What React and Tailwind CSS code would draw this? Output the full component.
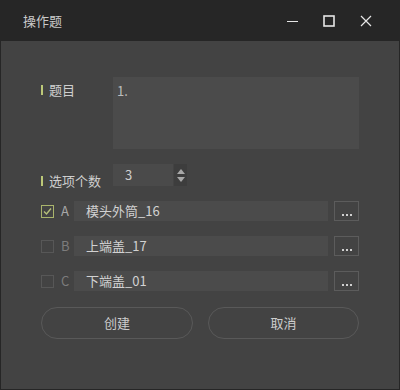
import React, { useState } from "react";

const font = { fontFamily: '"Noto Sans CJK SC", "Noto Sans", sans-serif' };

const Label = ({ text, className = "" }) => (
    <div className={`w-[72px] flex items-center gap-[6px] ${className}`}>
        <span className="w-[2px] h-[10px] bg-[#bcc878]" />
        <span className="text-[13px] leading-none text-[#cfcfcf]">{text}</span>
    </div>
);

const OptionRow = ({ letter, value, checked, onToggle }) => (
    <div className="flex items-center h-[20px]">
        <button
            onClick={onToggle}
            className={`w-[13px] h-[13px] border flex items-center justify-center ${checked ? "border-[#a9b46c]" : "border-[#575757]"}`}
        >
            {checked && (
                <svg width="11" height="11" viewBox="0 0 11 11">
                    <path d="M2 5.5l2.5 2.5L9 2.5" fill="none" stroke="#b6c07a" strokeWidth="1.4" />
                </svg>
            )}
        </button>
        <span className={`w-[20px] pl-[7px] text-[13px] ${checked ? "text-[#a8a8a8]" : "text-[#7c7c7c]"}`}>{letter}</span>
        <div className="w-[254px] h-[20px] bg-[#4b4b4b] flex items-center pl-[12px] text-[13px] text-[#d2d2d2]">
            {value}
        </div>
        <button className="ml-[6px] w-[25px] h-[20px] border border-[#5c5c5c] flex items-end justify-center pb-[4px]">
            <span className="flex gap-[2px]">
                <span className="w-[2px] h-[2px] bg-[#cfcfcf]" />
                <span className="w-[2px] h-[2px] bg-[#cfcfcf]" />
                <span className="w-[2px] h-[2px] bg-[#cfcfcf]" />
            </span>
        </button>
    </div>
);

const App = () => {
    const [checks, setChecks] = useState([true, false, false]);
    const options = ["模头外筒_16", "上端盖_17", "下端盖_01"];
    const toggle = (i) => setChecks(checks.map((c, j) => (j === i ? !c : c)));

    return (
        <div className="w-[400px] h-[390px] bg-[#262626] flex flex-col px-[1px] pb-[1px]" style={font}>
            <div className="h-[41px] flex items-center shrink-0">
                <span className="ml-[22px] text-[13px] text-[#c9c9c9]">操作题</span>
                <div className="ml-auto flex items-center">
                    <svg width="12" height="12" viewBox="0 0 12 12" className="mr-[24px]">
                        <path d="M0 6.5h11" stroke="#e6e6e6" strokeWidth="1" />
                    </svg>
                    <svg width="12" height="12" viewBox="0 0 12 12" className="mr-[25px]">
                        <rect x="1" y="1" width="10" height="10" fill="none" stroke="#e6e6e6" strokeWidth="1.6" />
                    </svg>
                    <svg width="12" height="12" viewBox="0 0 12 12" className="mr-[27px]">
                        <path d="M1 1l10 10M11 1L1 11" stroke="#e6e6e6" strokeWidth="1.2" />
                    </svg>
                </div>
            </div>
            <div className="flex-1 bg-[#434343] pl-[40px] pt-[36px] flex flex-col">
                <div className="flex">
                    <Label text="题目" className="self-start mt-[6px]" />
                    <div className="w-[246px] h-[72px] bg-[#4b4b4b] px-[4px] pt-[4px] text-[13px] text-[#bdbdbd]">1.</div>
                </div>
                <div className="flex mt-[15px]">
                    <Label text="选项个数" className="self-end mb-[-1px]" />
                    <div className="flex h-[22px]">
                        <div className="w-[60px] bg-[#4a4a4a] flex items-center pl-[12px] text-[13px] text-[#cfcfcf]">3</div>
                        <div className="w-[13px] ml-[1px] bg-[#3d3d3d] flex flex-col items-center justify-center gap-[3px]">
                            <svg width="8" height="5" viewBox="0 0 8 5"><path d="M0 5L4 0L8 5z" fill="#a8a8a8" /></svg>
                            <svg width="8" height="5" viewBox="0 0 8 5"><path d="M0 0L4 5L8 0z" fill="#a8a8a8" /></svg>
                        </div>
                    </div>
                </div>
                <div className="flex flex-col gap-[15px] mt-[15px]">
                    {options.map((o, i) => (
                        <OptionRow
                            key={o}
                            letter={["A", "B", "C"][i]}
                            value={o}
                            checked={checks[i]}
                            onToggle={() => toggle(i)}
                        />
                    ))}
                </div>
                <div className="flex gap-[15px] mt-[16px]">
                    <button className="w-[152px] h-[32px] rounded-full border border-[#595959] text-[13px] text-[#cdcdcd]">创建</button>
                    <button className="w-[151px] h-[32px] rounded-full border border-[#595959] text-[13px] text-[#cdcdcd]">取消</button>
                </div>
            </div>
        </div>
    );
};

export default App;
